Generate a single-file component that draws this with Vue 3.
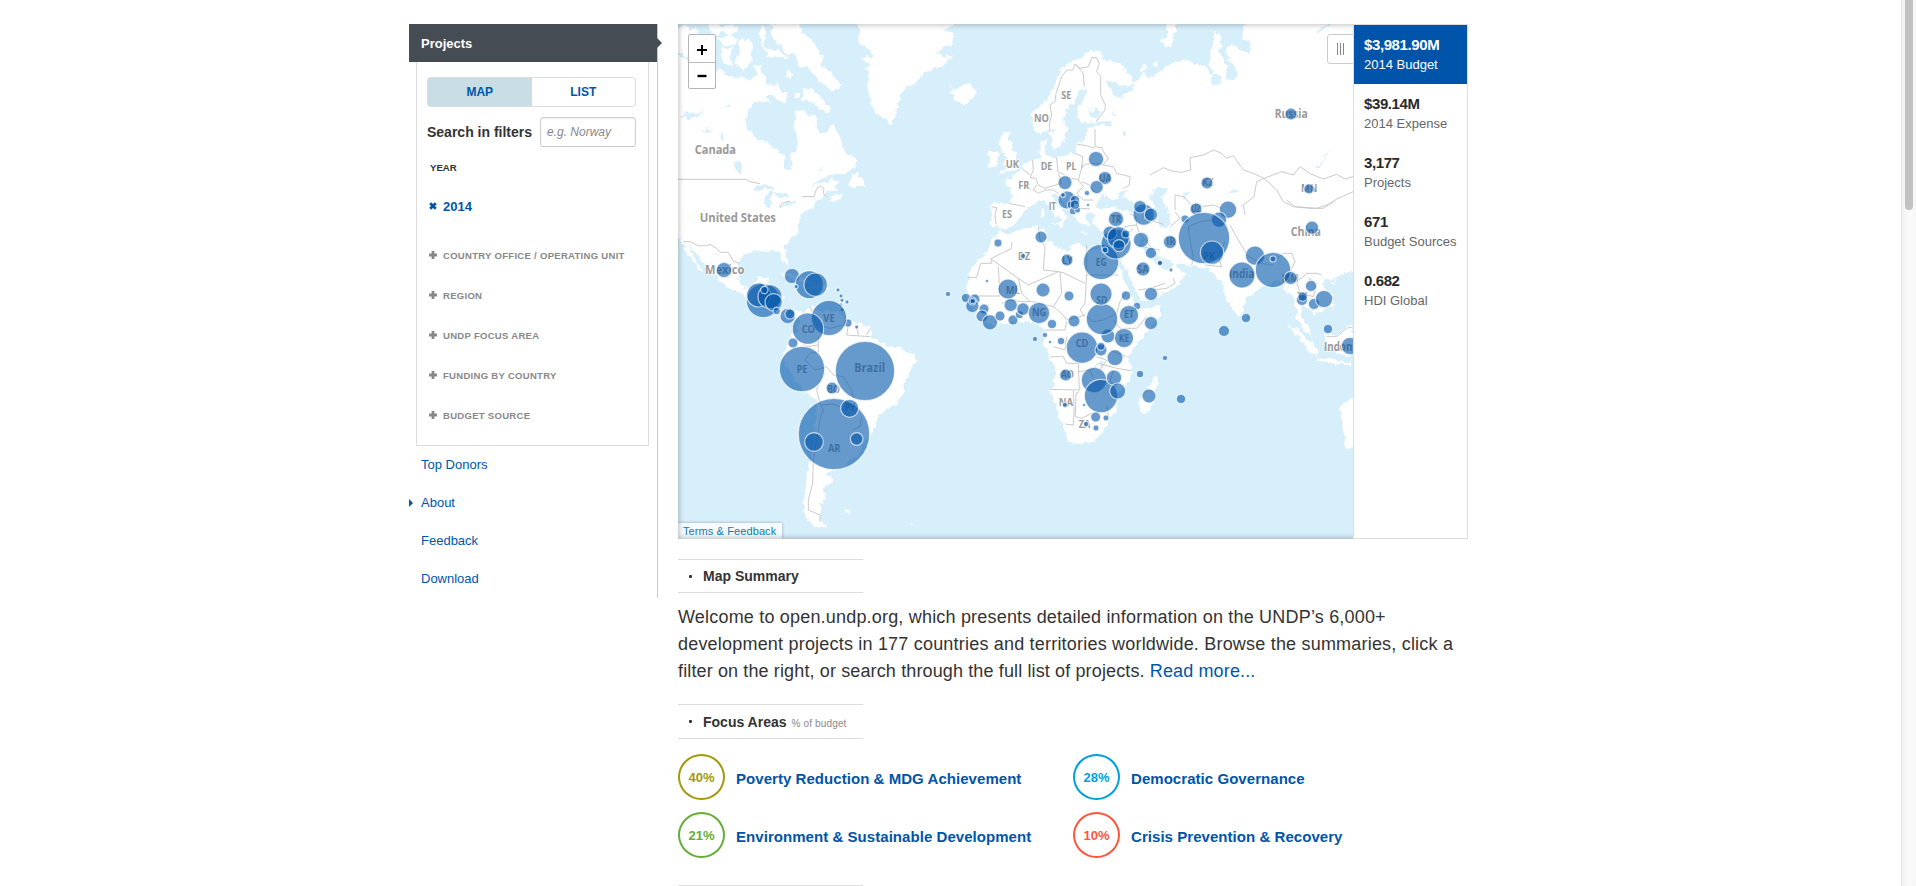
<script setup>
// Offsets of the map sheets on the common drawing grid (three units per pixel).
const sheets = { a: [0, 0], b: [0, 765], c: [780, 0], d: [840, 465], e: [840, 1005], f: [1440, 0], g: [1440, 555] }

// "a 10,20 30,40 b 50,60" -> points on the common grid
const trace = (text, closed) => {
  let sheet = sheets.a
  const pts = []
  for (const t of text.trim().split(/\s+/)) {
    if (sheets[t]) { sheet = sheets[t]; continue }
    const [x, y] = t.split(',').map(Number)
    pts.push(`${x + sheet[0]} ${y + sheet[1]}`)
  }
  return 'M' + pts.join('L') + (closed ? 'Z' : '')
}

const land = [
  // North and Central America
  'a 15,122 40,130 60,145 62,165 90,172 130,176 148,160 165,182 195,190 225,186 240,200 262,178 280,170 285,195 300,210 322,205 330,225 345,235 352,262 325,262 308,240 290,240 300,262 262,258 235,285 228,340 250,362 285,380 322,402 342,420 345,455 358,466 368,450 360,420 382,400 385,365 370,335 376,290 400,290 412,298 440,308 440,338 452,355 470,352 484,328 500,350 515,390 530,415 558,432 560,452 540,470 510,478 480,478 450,492 425,515 445,508 490,492 508,500 492,515 505,525 478,530 462,545 435,556 430,578 400,592 385,612 388,652 345,688 343,705 355,735 350,752 338,740 330,705 308,702 290,712 270,706 225,715 208,745 205,795 222,822 248,815 262,790 297,788 292,822 315,830 338,842 334,880 350,895 380,892 398,900 398,915 375,908 345,915 320,895 290,870 240,855 215,835 180,822 145,802 138,780 112,770 90,730 72,700 58,692 72,730 95,762 92,770 70,740 45,705 34,678 15,662',
  // South America
  'b 385,140 402,128 428,105 440,122 500,125 530,150 560,160 600,170 610,195 600,205 640,220 690,235 730,255 740,272 733,292 705,325 703,365 680,402 645,418 622,436 618,465 598,500 575,530 568,560 528,572 522,592 488,600 470,612 484,625 480,645 455,655 475,668 464,690 448,702 455,730 450,735 452,755 476,770 440,771 415,752 405,725 398,690 412,648 410,610 424,565 430,500 438,430 443,390 400,362 368,320 335,262 350,232 356,210 375,190 390,165',
  // Greenland
  'a 562,20 570,75 572,90 600,105 606,122 572,132 606,148 585,165 600,190 588,205 600,225 597,250 612,280 628,305 645,315 665,330 678,308 680,280 690,255 690,232 730,212 762,172 800,160 845,132 852,122 820,125 796,108 845,90 850,60 820,45 866,20',
  // Baffin and the Arctic islands
  'a 300,27 385,27 395,50 425,75 460,125 455,150 490,180 512,205 492,232 470,215 440,190 420,165 390,150 375,120 345,112 330,90 310,70',
  'a 398,220 425,222 450,240 482,280 478,292 450,280 425,262 395,258 402,240',
  'a 20,38 45,30 60,45 80,40 90,70 60,92 95,115 80,140 40,120 20,110',
  'a 120,20 150,35 195,27 205,48 170,60 150,50 135,70 118,45',
  'a 210,80 235,70 250,95 240,150 215,165 192,150 205,118',
  'a 270,30 290,30 280,70 290,100 320,105 360,130 330,125 300,130 282,105 270,70',
  'a 145,70 180,60 210,75 190,92 160,90',
  'a 150,95 185,100 180,130 190,150 160,145',
  'a 250,150 272,150 280,185 258,170', 'a 350,170 368,175 365,190 350,188', 'a 372,235 392,238 388,248 372,246',
  // Newfoundland and Iceland
  'a 545,478 565,472 558,488 582,490 586,520 570,510 548,515 538,505',
  'a 480,545 520,530 505,550 480,560',
  'a 835,208 852,218 860,222 880,210 905,208 920,232 912,248 880,268 848,252 855,240 838,234 852,226',
  // British Isles
  'c 212,362 222,352 242,355 232,375 245,378 248,408 260,420 258,430 272,440 268,458 240,470 212,475 232,455 218,450 228,432 226,412 214,408 206,388',
  'c 185,405 205,410 206,428 200,448 174,460 172,445 180,438 176,422',
  // Europe and Asia
  'c 308,345 302,318 304,298 330,275 360,240 380,190 400,155 440,130 465,118 480,105 518,118 515,132 548,140 590,165 608,190 605,212 575,215 545,198 528,195 540,220 560,255 575,250 580,235 602,228 615,212 605,200 632,195 640,170 655,188 670,185 690,170 f 80,140 112,132 140,150 165,158 185,180 190,210 212,208 215,190 180,160 178,125 190,85 188,60 200,50 215,75 210,115 225,140 235,150 230,185 240,195 265,180 255,155 238,140 230,100 240,85 265,100 300,118 305,85 275,70 285,20 620,20 g 620,205 580,225 540,240 530,232 515,255 545,285 548,315 510,335 492,345 475,320 455,315 448,345 470,370 488,408 465,395 438,350 440,330 425,282 400,265 385,240 340,255 320,275 285,300 280,335 265,350 248,325 225,290 218,245 200,235 175,205 125,197 75,192 55,178 35,175 10,155 -20,120 -30,115 -20,155 0,175 25,200 45,210 60,205 78,188 80,205 108,222 80,250 70,270 40,280 0,300 -40,302 d 565,385 550,340 528,300 518,275 500,250 495,240 500,205 c 562,640 535,635 515,645 490,625 488,605 500,590 498,595 475,595 468,610 485,635 465,632 452,630 435,605 420,585 402,562 388,540 366,538 372,560 405,592 408,612 398,628 380,605 345,555 325,562 310,572 295,580 272,602 258,630 215,645 200,632 180,632 190,600 180,580 185,562 240,566 248,550 240,515 220,500 228,488 248,490 250,478 275,460 300,435 330,430 328,400 330,385 348,372 355,385 345,408 355,425 380,430 435,412 442,385 465,375 465,345 495,330 540,330 545,318 500,320 455,325 442,310 440,280 462,255 475,228 455,220 440,240 430,268 408,285 400,325 415,340 402,370 392,395 370,402 362,365 350,345 328,362',
  'c 365,628 398,625 392,638', 'c 335,580 345,580 342,610 332,608', 'c 452,648 478,652 475,656 452,654', 'c 530,655 548,650 545,660 532,662',
  // Africa
  'd 150,185 178,190 215,175 268,172 285,180 282,205 330,235 355,242 370,225 390,225 410,235 450,240 475,240 490,238 495,262 512,300 530,345 552,395 568,415 600,415 635,407 625,440 590,490 560,520 540,550 e 535,20 543,60 540,95 520,112 500,132 500,182 475,205 462,242 430,275 400,280 365,285 352,265 340,225 325,190 300,120 318,75 302,30 290,0 d 278,512 285,480 255,455 200,455 140,468 100,458 70,425 50,385 55,340 55,315 85,270 115,240 125,212',
  // Madagascar, Sumatra, Java, Borneo, Australia
  'e 618,75 628,100 618,115 612,150 598,188 585,195 570,180 572,150 590,125',
  'g 412,372 440,385 470,415 502,445 500,468 480,458 450,420', 'g 500,470 530,472 575,485 605,487 605,496 560,490 505,482',
  'g 525,395 560,410 590,378 612,372 612,468 560,462 530,440', 'g 620,595 590,605 568,625 570,650 578,680 585,720 590,745 620,745',
  'g 538,250 555,240 552,258', 'g 275,342 290,345 285,360 275,355',
  // Caribbean and Falklands
  'a 325,775 360,770 400,785 425,800 395,800 350,785', 'a 410,805 470,803 475,820 420,822', 'b 520,724 545,722 535,732', 'b 715,758 735,768 725,768',
  'c 650,160 640,150 632,170', 'c 668,140 688,145 680,158', 'c 700,70 725,40 725,100 705,95', 'f 5,150 25,135 20,155', 'f 50,20 80,27 70,80 45,95 35,75 48,60',
]

const lakes = [
  'c 495,575 510,580 550,578 600,592 628,590 610,562 588,552 570,540 560,548 545,555 535,548 520,535 510,545 502,560',
  'c 560,538 598,522 585,540 572,545', 'f 20,520 50,520 42,540 30,550 45,570 58,590 62,625 50,640 30,635 20,590 5,560 0,540 5,525',
  'f 485,460 510,450 537,400 530,425 510,455', 'f 225,540 238,525 274,522 260,530 240,530', 'f 95,540 120,528 105,548',
  'a 252,522 278,505 312,515 315,525 290,520 260,524', 'a 288,540 302,530 325,530 350,535 355,550 330,552 312,535 305,550 300,582 288,572',
  'a 325,575 345,568 365,558 388,555 370,565 340,575', 'a 40,290 75,300 105,280 85,305 60,312 40,308', 'a 88,352 110,340 128,345 100,350', 'a 165,275 180,268 178,280',
  'a 188,435 210,445 215,470 200,472', 'a 150,350 165,365 172,375 155,370', 'a 408,470 418,462 412,472', 'a 448,460 456,458 453,468', 'a 72,582 82,590 76,590',
  'c 475,275 490,290 495,275 510,290 500,310 480,305', 'c 548,280 560,300 550,300', 'c 575,350 592,355 582,362', 'c 362,345 378,342 370,358', 'f 495,50 530,27 542,27 505,52', 'd 450,585 455,565 465,600',
]

const borders = [
  'a 24,493 228,493 240,500 270,506', 'a 330,578 335,565 360,558', 'a 396,545 432,545 440,520 452,513 462,520 460,535 468,545', 'a 40,680 60,680 85,692 112,692 120,688 140,700 150,712 175,712 190,738 208,745',
  'c 360,350 358,325 365,300 360,270 375,260 378,235 395,185 410,165 428,165 436,147 460,175 463,215', 'c 436,147 450,160 475,155 485,128 500,128 508,145 500,170 512,185 512,240 526,270 525,285 498,320',
  'c 495,342 495,395 515,398 520,410 535,430 520,450 500,445 465,448 455,460 458,425 435,415', 'c 440,388 470,392 495,400', 'c 380,428 384,470 400,478 418,488 445,495 452,470 458,448', 'c 308,435 310,465 300,488 318,490 325,510 345,520 360,515 395,505 385,475', 'c 275,460 300,480', 'c 320,510 310,525 325,535 345,525 370,525 385,535', 'c 240,566 285,575', 'c 185,575 200,578 195,600 198,628', 'c 455,500 478,510 490,530 510,535', 'c 445,495 460,515 440,535 460,555 490,555', 'c 420,530 430,555 450,580 480,582', 'c 520,450 550,455 560,475 600,485 598,510 580,520',
  'c 565,640 600,632 620,630 618,605 600,598', 'c 620,630 628,655 650,680 665,700 690,705', 'c 565,650 585,665 610,640', 'c 640,595 660,615 700,628',
  'd 120,265 205,325 235,345 325,305 340,308 405,340', 'd 145,290 150,378 70,378', 'd 55,322 80,322 92,280 125,280 125,265 185,235 185,215', 'd 410,225 410,315 505,315', 'd 410,315 405,400 390,420 405,440', 'd 265,172 270,210 285,230 280,300 325,305', 'd 330,305 335,370 310,410 250,395 215,395 180,390 155,400', 'd 310,410 335,430 350,450 405,435', 'd 285,480 345,480 350,455', 'd 410,440 430,455 460,450 500,430 510,395 530,365', 'd 490,450 510,475 560,475 590,440', 'd 205,325 215,370 240,395', 'd 310,530 345,540 350,500', 'd 565,360 600,355 645,340', 'd 500,250 540,215', 'd 565,225 610,240', 'd 440,560 470,570 450,600', 'd 480,540 530,560',
  'e 302,20 340,20 350,40 385,40 388,120 300,118', 'e 370,122 372,180 370,225 345,222', 'e 388,125 378,130 376,200 395,205 425,190', 'e 385,65 420,60 430,85', 'e 425,60 445,40 500,55 543,62', 'e 470,165 475,200', 'e 490,60 480,95 500,110',
  'f 0,480 40,458 65,468 95,472 122,465 120,428 160,420 190,405 215,415 228,430 250,422 280,465 310,475 342,490 320,500 312,545 280,570 285,600', 'f 342,490 395,470 430,480 450,455 478,475 520,492 560,478 585,492 609,485', 'f 342,490 380,525 400,560 430,575 480,580 520,580 555,555 609,530', 'f 75,585 75,540 100,545 125,570 150,575 190,570 215,580', 'f 60,635 90,610 75,590', 'g 240,75 265,120 280,145 290,165 330,190 370,195', 'g 125,197 130,170 120,120 115,80 150,65 190,60', 'g 165,195 215,200 205,165 225,125', 'g 370,185 400,160 425,160 435,185 420,215 440,240 455,235 470,220 500,220 515,225', 'g 410,0 435,20 500,25 545,10 555,0', 'g 440,245 450,280 490,290 500,250 475,235', 'g 530,410 560,410 590,385 609,380', 'g 70,235 75,250 50,265 10,270',
  'b 445,225 410,230 375,200', 'b 420,110 432,140 440,165 480,175 520,165', 'b 445,200 445,245 420,250 405,270 435,300 470,290 490,315 520,320 545,360 550,385', 'b 450,330 440,360 450,400 460,420 450,450 438,520 430,570 428,640 415,690 415,720 450,735 450,755', 'b 455,405 490,402 510,410 540,440', 'b 535,165 530,195 600,200', 'b 560,170 565,195', 'b 575,440 570,470 548,480', 'b 600,175 590,195',
]

const bubbleText = `
b 280,92,50 266,75,35 300,80,35 311,97,25 283,60,10 320,123,10 353,138,22 360,132,14 366,18,22 418,44,41 437,44,34 378,50,5 504,60,5 513,78,5 531,96,5 516,91,5 512,105,5 516,119,5 534,159,11 560,171,5 477,144,52 414,176,46 369,219,14 396,297,67 585,303,88 486,354,17 492,492,106 539,415,26 432,516,27 560,507,18 834,72,7
a 162,765,22
c 498,432,22
d 48,384,13 74,388,15 67,408,19 67,393,11 68,393,7 102,417,14 96,438,17 120,457,22 150,438,14 189,450,14 208,434,11 219,417,18 182,405,19 174,357,29 279,360,20 357,378,14 144,219,11 273,201,17 219,258,7 111,333,4 351,270,17 453,276,52 267,429,31 306,462,13 372,453,17 333,513,10 300,516,4 285,495,7 255,507,7 396,533,46 453,540,17 453,529,11 474,498,20 522,504,28 495,563,23 456,447,46 453,372,32 528,377,13 561,408,10 537,435,28 603,459,19 603,372,19 579,297,20 603,249,16 630,279,7 573,210,22 498,222,44 480,189,20 505,203,32 527,192,11 507,227,17 465,240,8 498,147,22 581,134,31 570,110,18 603,134,19 465,24,19 440,51,19 411,69,7 414,105,4 345,38,20 351,90,26 339,75,6 375,90,13 363,104,10 369,123,10 383,120,8 375,104,13 645,564,7
e 432,90,37 453,138,49 492,83,22 503,123,23 437,201,14 468,204,8 438,234,8 408,222,7 402,165,4 345,165,7 347,75,17 570,72,10 597,138,20 693,147,13
f 423,297,17 171,504,17 477,522,14 138,582,17 105,612,11 234,584,25 207,614,22 486,638,19
g 162,114,76 186,158,34 60,126,19 276,225,38 315,167,28 369,210,52 369,177,8 422,234,19 483,258,16 456,300,16 458,290,13 492,312,16 522,297,25 534,387,13 600,438,25 288,354,13 222,393,16 30,189,7 63,210,5`

const bubbles = bubbleText.trim().split('\n').flatMap((line) => {
  const [key, ...items] = line.split(' ')
  return items.map((i) => {
    const [x, y, r] = i.split(',').map(Number)
    return { x: x + sheets[key][0], y: y + sheets[key][1], r: r + 1 }
  })
})

const labels = [
  ['a', 74, 198, 416, 'Canada'], ['a', 89, 318, 621, 'United States'], ['a', 105, 223, 777, 'Mexico'],
  ['b', 460, 494, 156, 'VE'], ['b', 395, 435, 189, 'CO'], ['b', 380, 412, 308, 'PE'], ['b', 553, 645, 306, 'Brazil'], ['b', 472, 510, 368, 'BO'], ['b', 524, 556, 424, 'PY'], ['b', 474, 511, 545, 'AR'],
  ['c', 394, 424, 251, 'SE'], ['c', 312, 357, 321, 'NO'], ['c', 227, 267, 458, 'UK'], ['c', 332, 367, 465, 'DE'], ['c', 408, 439, 465, 'PL'], ['c', 265, 298, 521, 'FR'], ['c', 356, 378, 585, 'IT'], ['c', 216, 246, 610, 'ES'], ['c', 508, 544, 500, 'UA'], ['c', 543, 574, 623, 'TR'], ['c', 264, 300, 736, 'DZ'], ['c', 396, 428, 746, 'LY'], ['c', 497, 530, 752, 'EG'], ['c', 621, 656, 773, 'SA'],
  ['d', 167, 209, 371, 'ML'], ['d', 246, 289, 439, 'NG'], ['d', 439, 472, 401, 'SD'], ['d', 523, 552, 443, 'ET'], ['d', 506, 538, 515, 'KE'], ['d', 377, 415, 531, 'CD'],
  ['e', 332, 372, 85, 'AO'], ['e', 326, 369, 168, 'NA'], ['e', 386, 421, 235, 'ZA'],
  ['f', 374, 473, 309, 'Russia'], ['f', 157, 190, 514, 'KZ'], ['f', 453, 502, 532, 'MN'], ['f', 123, 154, 592, 'UZ'],
  ['g', 422, 513, 109, 'China'], ['g', 49, 76, 136, 'IR'], ['g', 160, 195, 180, 'PK'], ['g', 237, 313, 233, 'India'], ['g', 396, 446, 246, 'MM'], ['g', 442, 472, 300, 'TH'], ['g', 522, 607, 452, 'Indon'],
].map(([k, x1, x2, y, text]) => ({ x: x1 + sheets[k][0], w: x2 - x1, y: y + sheets[k][1], text, size: text.length > 2 ? 36 : 32 }))

const filters = ['COUNTRY OFFICE / OPERATING UNIT', 'REGION', 'UNDP FOCUS AREA', 'FUNDING BY COUNTRY', 'BUDGET SOURCE']
const links = ['Top Donors', 'About', 'Feedback', 'Download']
const stats = [
  ['$3,981.90M', '2014 Budget'], ['$39.14M', '2014 Expense'], ['3,177', 'Projects'], ['671', 'Budget Sources'], ['0.682', 'HDI Global'],
]
const focus = [
  ['40%', 'Poverty Reduction & MDG Achievement', 'olive'],
  ['28%', 'Democratic Governance', 'cyan'],
  ['21%', 'Environment & Sustainable Development', 'green'],
  ['10%', 'Crisis Prevention & Recovery', 'red'],
]
</script>

<template>
  <div class="page">
    <aside class="side">
      <div class="side-head">Projects</div>
      <div class="filters">
        <div class="toggle"><span class="on">MAP</span><span>LIST</span></div>
        <div class="search"><b>Search in filters</b><span class="input">e.g. Norway</span></div>
        <div class="year">YEAR</div>
        <div class="picked">
          <svg width="8" height="8" viewBox="0 0 8 8"><path d="M1.2 1.2l5.6 5.6M6.8 1.2L1.2 6.8" stroke="#0055aa" stroke-width="2.7" /></svg>2014
        </div>
        <div v-for="f in filters" :key="f" class="filter">
          <svg width="8" height="8" viewBox="0 0 8 8"><path d="M0 4h8M4 0v8" stroke="#888" stroke-width="2.8" /></svg>{{ f }}
        </div>
      </div>
      <nav><a v-for="l in links" :key="l" :class="{ current: l === 'About' }">{{ l }}</a></nav>
    </aside>

    <main class="main">
      <section class="map-row">
        <div class="map">
          <svg class="world" width="675" height="515" viewBox="24 27 2025 1545">
            <defs>
              <filter id="coast" x="0" y="0" width="2100" height="1600" filterUnits="userSpaceOnUse">
                <feTurbulence type="fractalNoise" baseFrequency="0.05" numOctaves="3" seed="4" result="n" />
                <feDisplacementMap in="SourceGraphic" in2="n" scale="22" xChannelSelector="R" yChannelSelector="G" />
              </filter>
            </defs>
            <g filter="url(#coast)">
              <path v-for="(p, i) in land" :key="'l' + i" :d="trace(p, true)" fill="#fff" />
              <path v-for="(p, i) in lakes" :key="'w' + i" :d="trace(p, true)" fill="#d6effb" />
            </g>
            <path v-for="(p, i) in borders" :key="'b' + i" :d="trace(p, false)" class="border" />
            <text v-for="l in labels" :key="l.text" :x="l.x" :y="l.y" :textLength="l.w" :font-size="l.size" lengthAdjust="spacingAndGlyphs" class="place">{{ l.text }}</text>
            <circle v-for="(b, i) in bubbles" :key="'c' + i" :cx="b.x" :cy="b.y" :r="b.r" class="bubble" />
          </svg>
          <div class="zoomer">
            <span><svg width="10" height="10"><path d="M0 5h10M5 0v10" stroke="#000" stroke-width="2" /></svg></span>
            <span><svg width="10" height="10"><path d="M.5 5h9" stroke="#000" stroke-width="2.4" /></svg></span>
          </div>
          <div class="grip"><i></i><i></i><i></i></div>
          <div class="terms">Terms &amp; Feedback</div>
        </div>
        <div class="stats">
          <div v-for="(s, i) in stats" :key="s[1]" :class="['stat', { active: i === 0 }]"><b>{{ s[0] }}</b><span>{{ s[1] }}</span></div>
        </div>
      </section>

      <h3 class="first"><i></i>Map Summary</h3>
      <p class="intro">
        <span class="l1">Welcome to open.undp.org, which presents detailed information on the UNDP’s 6,000+</span>
        <span class="l2">development projects in 177 countries and territories worldwide. Browse the summaries, click a</span>
        <span class="l3">filter on the right, or search through the full list of projects. <a>Read more...</a></span>
      </p>
      <h3 class="second"><i></i>Focus Areas <small>% of budget</small></h3>
      <div class="focus">
        <div v-for="f in focus" :key="f[1]" class="area"><span :class="['ring', f[2]]">{{ f[0] }}</span><b>{{ f[1] }}</b></div>
      </div>
      <div class="rule"></div>
    </main>
    <div class="scroll"><div class="thumb"></div></div>
  </div>
</template>

<style>
body { background: #fff; overflow: hidden; }
</style>

<style scoped>
.page { position: relative; box-sizing: border-box; width: 1916px; height: 886px; overflow: hidden; padding: 24px 0 0 409px; display: flex; align-items: flex-start; gap: 20px; font-family: "Liberation Sans", Arial, sans-serif; color: #333; }
.side { position: relative; box-sizing: border-box; width: 249px; height: 574px; border-right: 1px solid #a3d3f3; }
.side-head { position: relative; box-sizing: border-box; height: 38px; padding-left: 12px; line-height: 39px; background: #454c54; color: #fff; font-size: 13px; font-weight: bold; }
.side-head::after { content: ""; position: absolute; left: 248px; top: 14px; border: 5px solid transparent; border-left-color: #454c54; border-right: 0; }
.filters { box-sizing: border-box; width: 233px; height: 384px; margin-left: 7px; padding: 15px 12px 0 10px; border: 1px solid #ddd; border-top: 0; }
.toggle { box-sizing: border-box; display: flex; height: 30px; border: 1px solid #ddd; border-radius: 3px; line-height: 28px; text-align: center; font-size: 12px; font-weight: bold; color: #0055aa; overflow: hidden; }
.toggle span { flex: 1; }
.toggle .on { background: #c8dde4; }
.search { display: flex; justify-content: space-between; align-items: center; margin-top: 10px; font-size: 14px; white-space: nowrap; }
.input { box-sizing: border-box; width: 96px; height: 30px; padding-left: 6px; border: 1px solid #ccc; border-radius: 3px; line-height: 28px; font-size: 12px; font-style: italic; color: #888; box-shadow: inset 0 1px 2px #eee; }
.year { margin: 10px 0 0 3px; height: 20px; line-height: 22px; font-size: 9.6px; font-weight: bold; }
.picked { display: flex; align-items: center; gap: 6px; height: 20px; margin: 19px 0 19px 2px; font-size: 13px; font-weight: bold; color: #0055aa; }
.filter { display: flex; align-items: center; gap: 6px; height: 40px; margin-left: 2px; font-size: 9.5px; letter-spacing: .3px; font-weight: bold; color: #888; white-space: nowrap; }
nav a { position: relative; display: block; height: 38px; padding-left: 12px; line-height: 37px; font-size: 13px; color: #0055aa; }
.current::before { content: ""; position: absolute; left: 0; top: 15px; border: 4px solid transparent; border-left-color: #0055aa; border-right: 0; }
.main { width: 790px; }
.map-row { display: flex; height: 515px; }
.map { position: relative; width: 675px; height: 515px; overflow: hidden; background: #d6effb; }
.map::after { content: ""; position: absolute; inset: 0 -10px 0 0; box-shadow: inset 0 0 6px rgba(0, 0, 0, .35); pointer-events: none; }
.world { display: block; }
.border { fill: none; stroke: #c6c6c6; stroke-width: 2.8; stroke-linejoin: round; }
.place { font-family: "Open Sans", "Noto Sans", sans-serif; font-weight: 700; fill: #999; stroke: #fff; stroke-width: 4px; stroke-opacity: .7; paint-order: stroke; }
.bubble { fill: #0055aa; fill-opacity: .6; stroke: #fff; stroke-width: 3.4; stroke-opacity: .7; }
.zoomer { position: absolute; left: 10px; top: 10px; z-index: 1; box-sizing: border-box; width: 28px; height: 55px; border: 1px solid #b5b5b5; border-radius: 2px; background: #fff; }
.zoomer span { box-sizing: border-box; display: flex; align-items: center; justify-content: center; height: 27px; padding: 2px 1px 0 0; }
.zoomer span + span { border-top: 1px solid #bbb; height: 26px; padding-top: 1px; }
.grip { position: absolute; right: -2px; top: 10px; box-sizing: border-box; width: 28px; height: 30px; border: 1px solid #ccc; border-radius: 3px; background: #fff; display: flex; gap: 2px; padding: 8px 0 8px 9px; z-index: 1; }
.grip i { width: 1px; background: #888; }
.terms { position: absolute; left: 0; bottom: 0; width: 104px; height: 16px; padding-left: 5px; box-sizing: border-box; line-height: 17px; font-size: 11px; letter-spacing: .1px; white-space: nowrap; color: #0d7cad; background: rgba(255, 255, 255, .75); box-shadow: 0 0 3px rgba(0, 0, 0, .3); }
.stats { box-sizing: border-box; width: 115px; border: 1px solid #ddd; }
.stat { box-sizing: border-box; height: 59px; padding: 10px 0 0 11px; margin-left: -1px; white-space: nowrap; display: flex; flex-direction: column; }
.stat b { line-height: 20px; font-size: 15px; letter-spacing: -.4px; color: #2a2a2a; }
.stat span { line-height: 19px; font-size: 13px; color: #666; }
.active { margin-left: 0; padding-left: 10px; background: #0055aa; }
.stats .active b, .stats .active span { color: #fff; }
h3 { box-sizing: border-box; display: flex; align-items: center; width: 185px; margin: 0; border: solid #ddd; border-width: 1px 0; font-size: 14px; white-space: nowrap; }
h3 i { width: 3px; height: 3px; margin: 0 11px 0 11px; background: #333; border-radius: 1px; }
h3 small { margin: 3px 0 0 5px; font-size: 10px; letter-spacing: .15px; font-weight: normal; color: #888; }
.first { margin-top: 20px; height: 34px; }
.second { height: 35px; }
.intro { margin: 11px 0 19px; height: 81px; font-size: 18px; line-height: 27px; white-space: nowrap; }
.intro span { display: block; }
.l1 { letter-spacing: .19px; }
.l2 { letter-spacing: .2px; }
.l3 { letter-spacing: .13px; }
.intro a { color: #0055aa; }
.focus { display: grid; grid-template-columns: 395px 395px; row-gap: 12px; margin-top: 15px; }
.area { display: flex; align-items: center; gap: 11px; height: 46px; font-size: 15px; letter-spacing: .05px; color: #0055aa; white-space: nowrap; }
.area b { padding-top: 2px; }
.ring { box-sizing: border-box; width: 47px; height: 46px; border: 2px solid; border-radius: 50%; line-height: 43px; text-align: center; font-size: 13px; letter-spacing: 0; font-weight: bold; }
.olive { color: #a29a0c; }
.cyan { color: #009fda; }
.green { color: #64ae38; }
.red { color: #ff543d; }
.rule { width: 185px; height: 1px; margin-top: 27px; background: #ddd; }
.scroll { position: absolute; right: 0; top: 0; box-sizing: border-box; width: 15px; height: 886px; border-left: 1px solid #e2e2e2; background: linear-gradient(90deg, #f2f2f2, #fbfbfb 60%, #f6f6f6); }
.thumb { width: 8px; height: 210px; margin-left: 3px; border-radius: 0 0 4px 4px; background: #c1c1c1; }
</style>
